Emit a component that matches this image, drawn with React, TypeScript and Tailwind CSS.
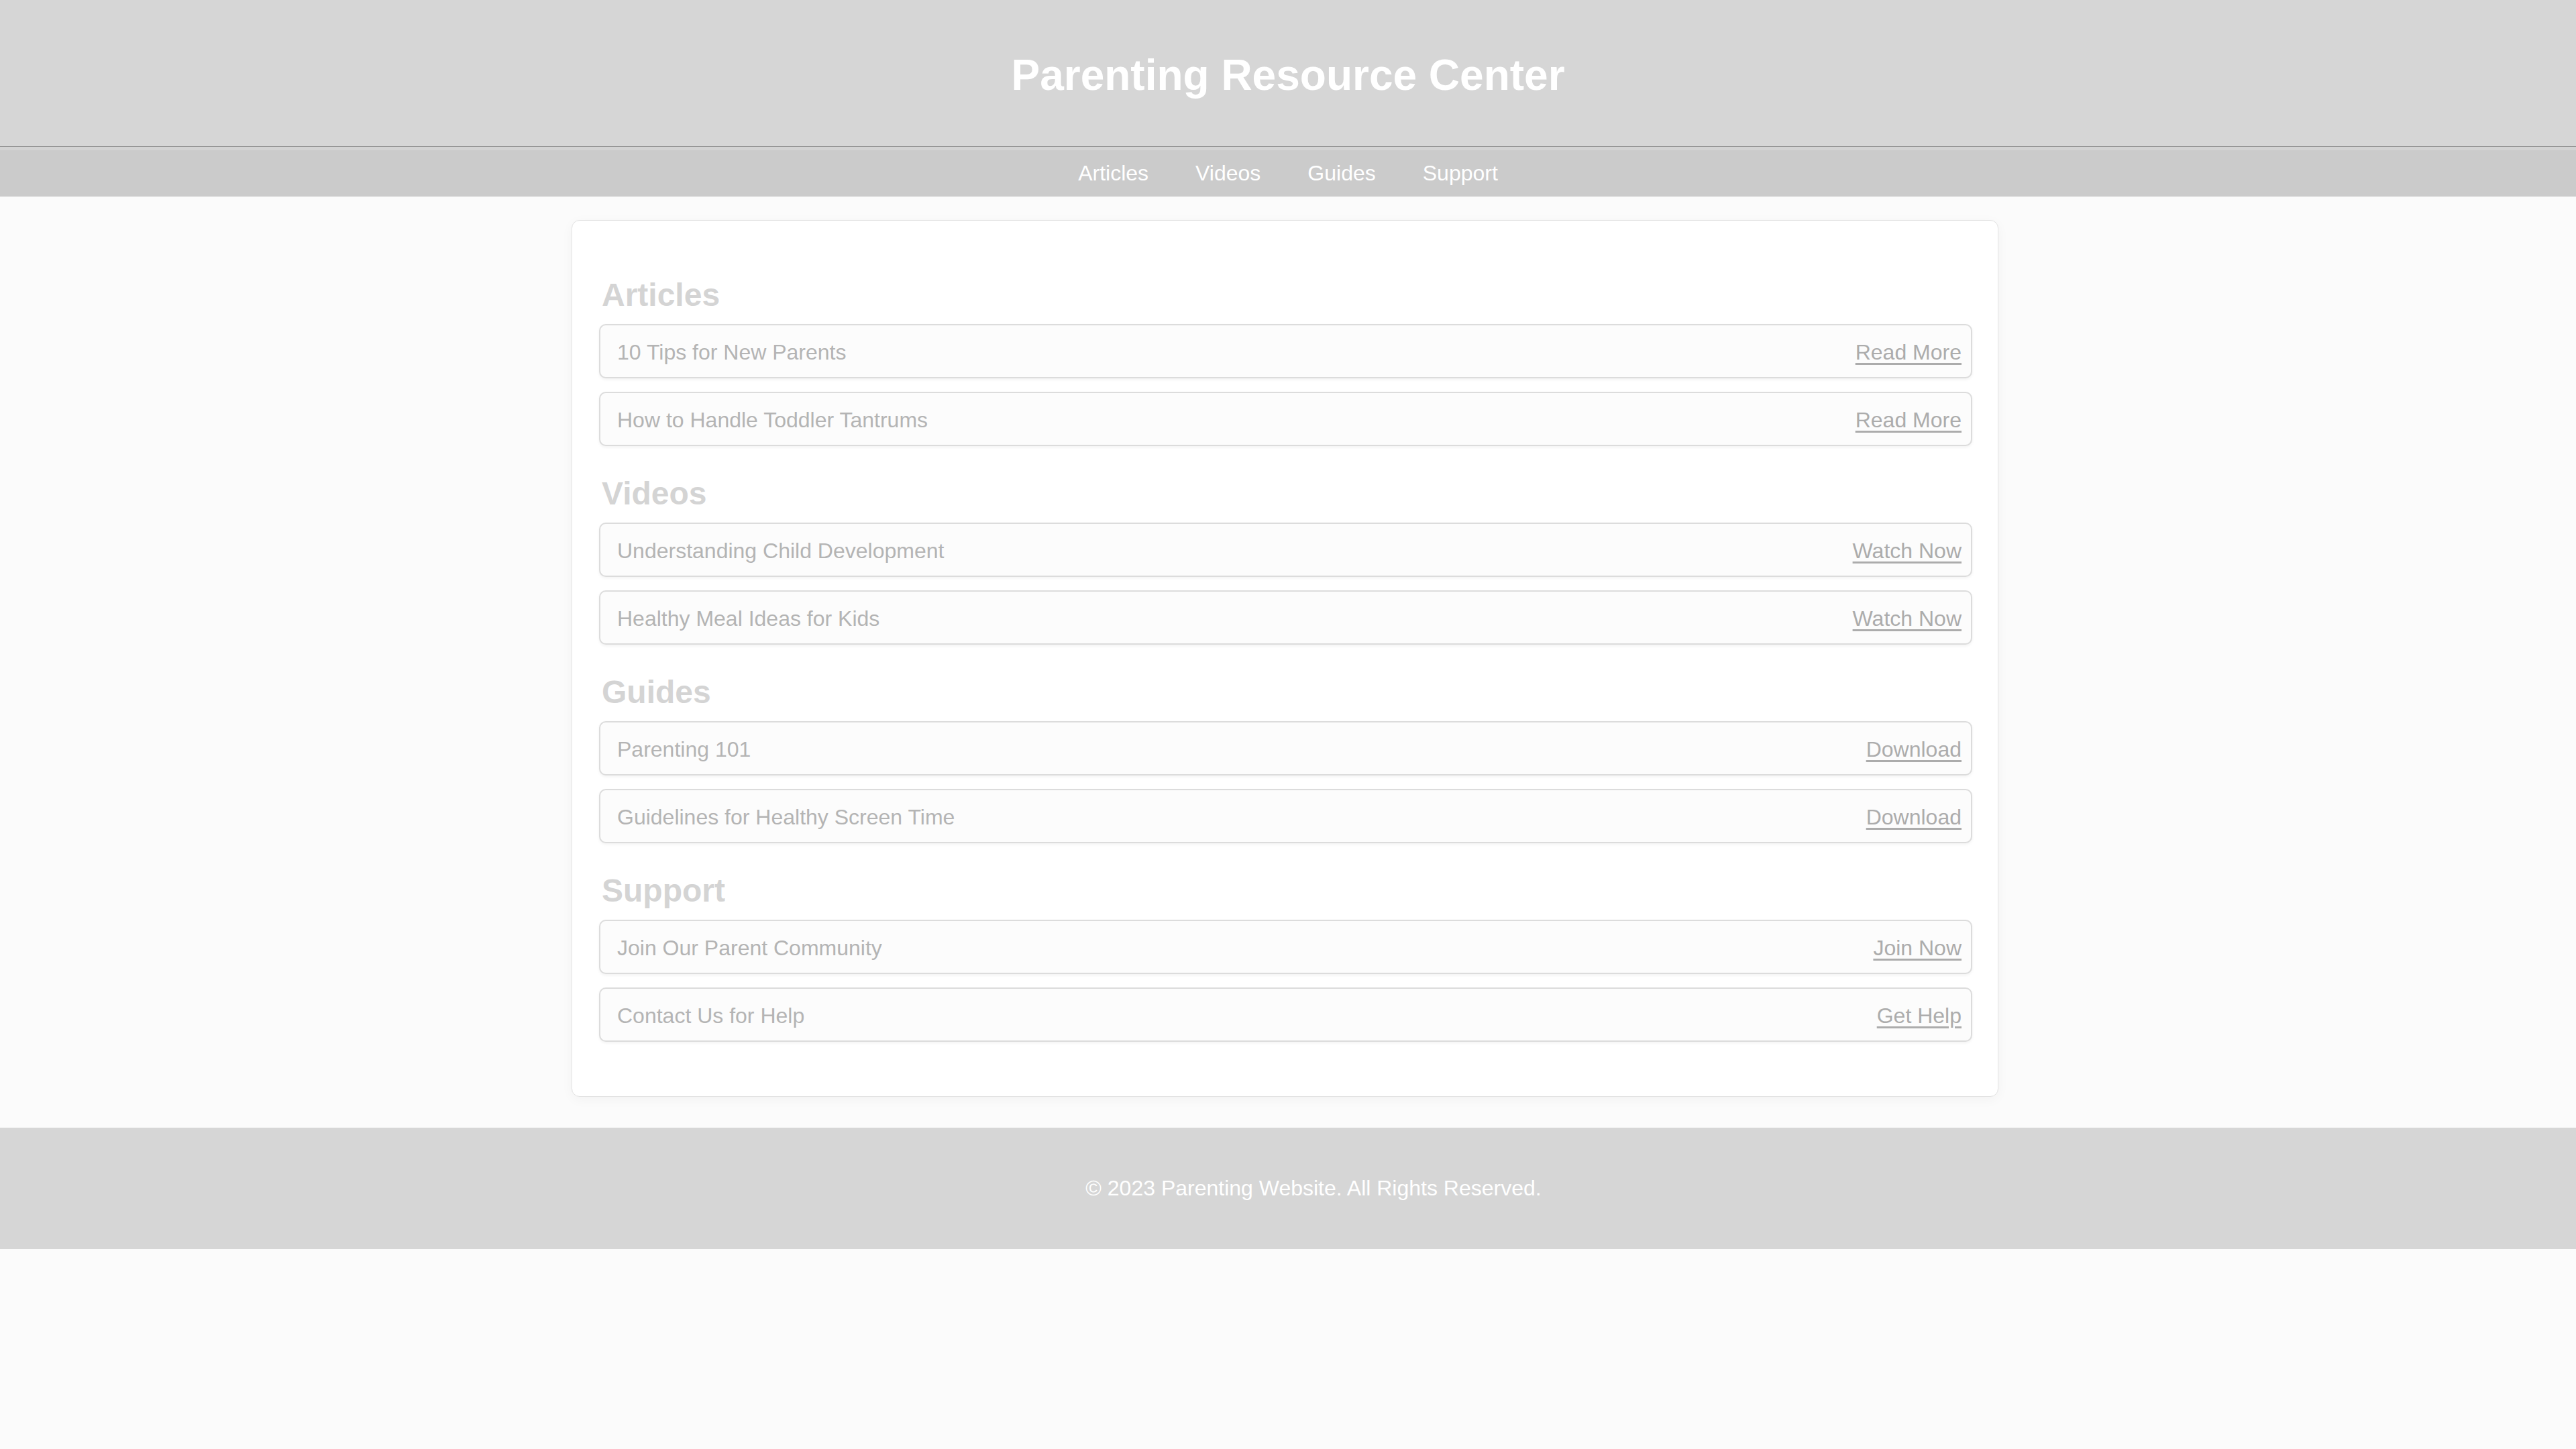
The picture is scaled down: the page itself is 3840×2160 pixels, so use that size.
import React from 'react';

type Item = {
  title: string;
  action: string;
};

type Section = {
  heading: string;
  items: Item[];
};

const NAV = ['Articles', 'Videos', 'Guides', 'Support'];

const SECTIONS: Section[] = [
  {
    heading: 'Articles',
    items: [
      { title: '10 Tips for New Parents', action: 'Read More' },
      { title: 'How to Handle Toddler Tantrums', action: 'Read More' },
    ],
  },
  {
    heading: 'Videos',
    items: [
      { title: 'Understanding Child Development', action: 'Watch Now' },
      { title: 'Healthy Meal Ideas for Kids', action: 'Watch Now' },
    ],
  },
  {
    heading: 'Guides',
    items: [
      { title: 'Parenting 101', action: 'Download' },
      { title: 'Guidelines for Healthy Screen Time', action: 'Download' },
    ],
  },
  {
    heading: 'Support',
    items: [
      { title: 'Join Our Parent Community', action: 'Join Now' },
      { title: 'Contact Us for Help', action: 'Get Help' },
    ],
  },
];

function ResourceRow({ item }: { item: Item }) {
  return (
    <li className="flex items-center justify-between bg-[#fcfcfc] border-2 border-[#dcdcdc] rounded-[10px] pl-[25px] pr-[14px] pt-[22px] pb-[18px] shadow-[0_2px_4px_rgba(0,0,0,0.05)]">
      <span className="text-[32px] leading-[37px] text-[#b4b4b4]">{item.title}</span>
      <a href="#" className="text-[32px] leading-[37px] text-[#acacac] underline decoration-[3px] underline-offset-[5px]">
        {item.action}
      </a>
    </li>
  );
}

export default function App() {
  return (
    <div className="min-h-screen bg-[#fbfbfb] font-['Liberation_Sans',Arial,sans-serif]">
      {/* Header */}
      <header className="h-[218px] bg-[#d6d6d6] pt-[76px] text-center">
        <h1 className="text-[64px] leading-[73px] font-bold text-white">Parenting Resource Center</h1>
      </header>
      <div className="h-px bg-[#8f8f8f]"></div>
      <div className="h-[5px] bg-[#d3d3d3]"></div>

      {/* Nav */}
      <nav className="bg-[#cbcbcb] py-[16px]">
        <ul className="flex justify-center gap-[70px]">
          {NAV.map((n) => (
            <li key={n}>
              <a href="#" className="text-[32px] leading-[37px] text-white">{n}</a>
            </li>
          ))}
        </ul>
      </nav>

      {/* Content */}
      <main className="flex justify-center pt-[35px] pb-[46px] pr-[9px]">
        <div className="w-[2127px] bg-white border border-[#e2e2e2] rounded-[12px] pl-[40px] pr-[38px] pt-[83px] pb-[81px] shadow-[0_4px_18px_rgba(0,0,0,0.04)] flex flex-col gap-[43px]">
          {SECTIONS.map((s) => (
            <section key={s.heading}>
              <h2 className="pl-[4px] text-[48px] leading-[55px] font-bold text-[#d4d4d4] mb-[16px]">{s.heading}</h2>
              <ul className="flex flex-col gap-[20px]">
                {s.items.map((it) => (
                  <ResourceRow key={it.title} item={it} />
                ))}
              </ul>
            </section>
          ))}
        </div>
      </main>

      {/* Footer */}
      <footer className="bg-[#d6d6d6] py-[72px] pl-[76px] text-center">
        <p className="text-[32px] leading-[37px] text-white">&copy; 2023 Parenting Website. All Rights Reserved.</p>
      </footer>
    </div>
  );
}
